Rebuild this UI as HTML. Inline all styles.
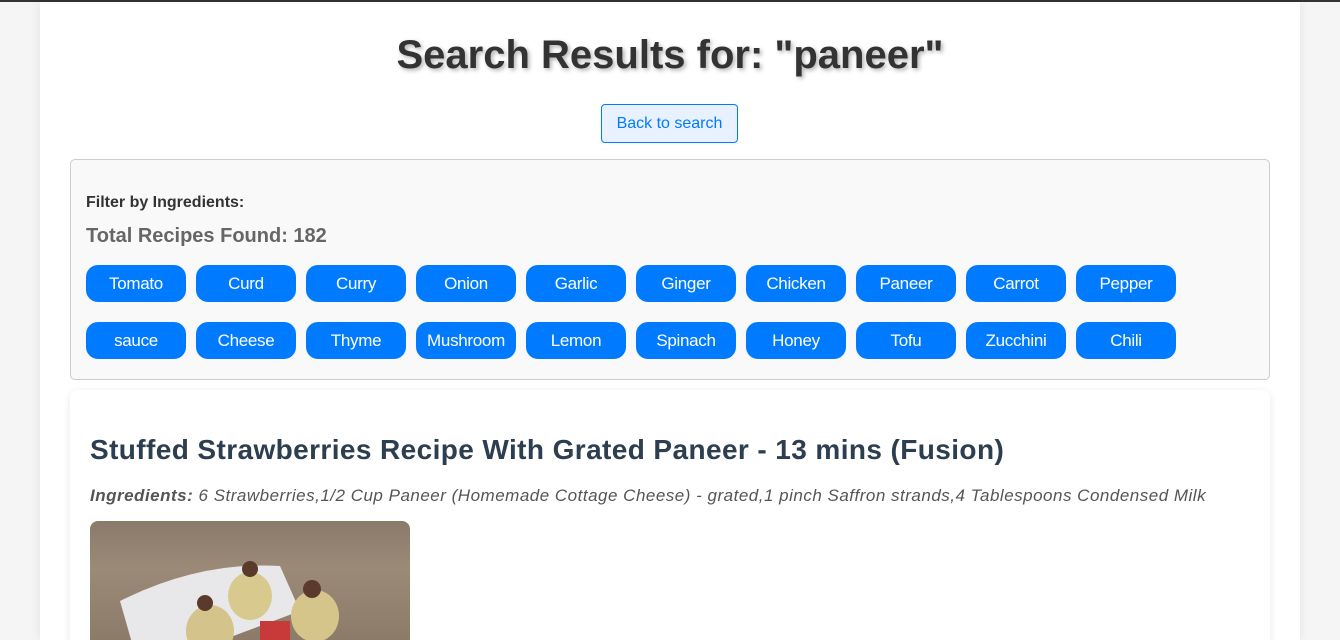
<!DOCTYPE html>
<html style="height:640px;overflow:hidden"><head><style>
*{box-sizing:border-box;margin:0;padding:0}
html,body{width:1340px;height:640px;overflow:hidden}
body{background:#f5f5f5;font-family:"Liberation Sans",Arial,sans-serif;border-top:2px solid #333;position:relative}
.c{position:absolute;left:40px;top:0;width:1260px;height:638px;overflow:hidden;background:#fff;box-shadow:0 0 10px rgba(0,0,0,.08)}
h1{position:absolute;left:0;width:1260px;top:31px;text-align:center;font-size:40px;font-weight:bold;color:#333;text-shadow:2px 2px 4px rgba(0,0,0,.3)}
.btn{position:absolute;left:561px;top:102px;width:137px;height:39px;border:1px solid #007bff;border-radius:4px;background:#e7f1ff;color:#007bff;font-size:16px;text-align:center;line-height:37px}
.f{position:absolute;left:30px;top:157px;width:1200px;height:221px;background:#f9f9f9;border:1px solid #ccc;border-radius:5px}
.l{position:absolute;left:15px;top:34px;font-size:16px;font-weight:bold;color:#333}
.t{position:absolute;left:15px;top:65px;font-size:20px;font-weight:bold;color:#666}
.chips{position:absolute;left:15px;top:105px;width:1100px}
.chip{float:left;width:100px;height:37px;margin:0 10px 20px 0;background:#007bff;color:#fff;border-radius:12px;font-size:17px;text-align:center;line-height:37px;letter-spacing:-0.3px}
.card{position:absolute;left:30px;top:388px;width:1200px;height:260px;background:#fff;border-radius:8px;box-shadow:0 2px 8px rgba(0,0,0,.1)}
.card h2{position:absolute;left:20px;top:44px;font-size:28px;color:#2c3e50;letter-spacing:0.4px;white-space:nowrap}
.card p{position:absolute;left:20px;top:96px;font-size:17px;font-style:italic;color:#555;letter-spacing:0.5px;white-space:nowrap}
.img{position:absolute;left:20px;top:131px;width:320px;height:119px;border-radius:8px 8px 0 0;overflow:hidden;background:linear-gradient(180deg,#8a7a6a 0%,#9c8a78 40%,#8d7b69 100%)}
</style></head><body>
<div class="c">
<h1>Search Results for: "paneer"</h1>
<div class="btn">Back to search</div>
<div class="f">
<div class="l">Filter by Ingredients:</div>
<div class="t">Total Recipes Found: 182</div>
<div class="chips">
<div class="chip">Tomato</div><div class="chip">Curd</div><div class="chip">Curry</div><div class="chip">Onion</div><div class="chip">Garlic</div><div class="chip">Ginger</div><div class="chip">Chicken</div><div class="chip">Paneer</div><div class="chip">Carrot</div><div class="chip">Pepper</div>
<div class="chip">sauce</div><div class="chip">Cheese</div><div class="chip">Thyme</div><div class="chip">Mushroom</div><div class="chip">Lemon</div><div class="chip">Spinach</div><div class="chip">Honey</div><div class="chip">Tofu</div><div class="chip">Zucchini</div><div class="chip">Chili</div>
</div></div>
<div class="card">
<h2>Stuffed Strawberries Recipe With Grated Paneer - 13 mins (Fusion)</h2>
<p><b>Ingredients:</b> 6 Strawberries,1/2 Cup Paneer (Homemade Cottage Cheese) - grated,1 pinch Saffron strands,4 Tablespoons Condensed Milk</p>
<div class="img"><svg width="320" height="119">
<path d="M30 80 Q110 40 190 45 L210 90 L50 150 Z" fill="#e8e8ea"/>
<ellipse cx="160" cy="75" rx="22" ry="24" fill="#d8c98e"/><circle cx="160" cy="48" r="8" fill="#5a3a2a"/>
<ellipse cx="225" cy="95" rx="24" ry="26" fill="#d6c58a"/><circle cx="222" cy="68" r="9" fill="#5a3a2a"/>
<ellipse cx="120" cy="110" rx="24" ry="26" fill="#d4c48c"/><circle cx="115" cy="82" r="8" fill="#5a3a2a"/>
<rect x="170" y="100" width="30" height="40" fill="#c83a3a"/>
</svg></div>
</div>
</div>
</body></html>
